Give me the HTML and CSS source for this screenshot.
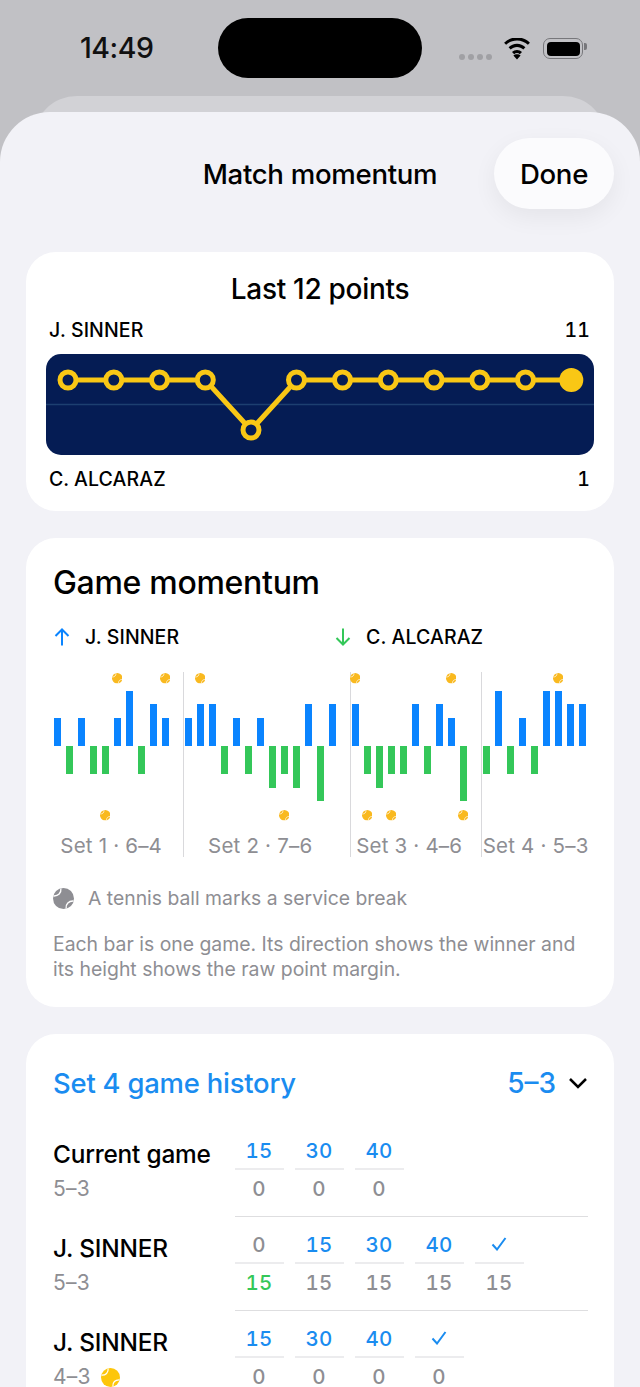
FILE: index.html
```html
<!DOCTYPE html>
<html lang="en">
<head>
<meta charset="utf-8">
<title>Match momentum</title>
<link rel="stylesheet" href="styles.css">
</head>
<body>
<svg class="defs" width="0" height="0" aria-hidden="true">
  <symbol id="ball" viewBox="0 0 20 20">
    <circle cx="10" cy="10" r="10" fill="currentColor"/>
    <path d="M7.5 .6C8 4.8 5 7.8 .6 7.6M19.4 12.4C15 12.2 12 15.2 12.5 19.4" fill="none" stroke="#fff" stroke-width="1.3"/>
  </symbol>
</svg>
<div class="screen">
  <div class="back-sheet"></div>
  <header class="status">
    <span class="time">14:49</span>
    <div class="island"></div>
    <div class="status-icons">
      <div class="dots"><i></i><i></i><i></i><i></i></div>
      <svg class="wifi" width="28" height="22" viewBox="0 0 28 22"><path d="M14 2.4c4.2 0 8 1.6 10.9 4.4l2-2.1C23.5 1.300 19 -.6 14-.6S4.500 1.300 1.100 4.700l2 2.100C6 4 9.800 2.400 14 2.400zM14 9c2.400 0 4.600 .9 6.300 2.500l2.100-2.200C20.100 7.100 17.200 5.800 14 5.800S7.900 7.100 5.600 9.300l2.100 2.200C9.400 9.900 11.600 9 14 9zM14 15.100c1.100 0 2 .4 2.800 1.100l2.200-2.300c-1.300-1.300-3.100-2-5-2s-3.700 .7-5 2l2.200 2.300c.8-.7 1.700-1.100 2.800-1.100zM14 21.400l3.600-3.800c-.9-.8-2.200-1.300-3.600-1.300s-2.700 .5-3.600 1.300z" fill="#000"/></svg>
      <div class="battery"><i></i></div>
    </div>
  </header>

  <main class="sheet">
    <div class="nav">
      <span></span>
      <h1 class="nav-title">Match momentum</h1>
      <button class="done">Done</button>
    </div>

    <section class="card card-points">
      <h2 class="points-title">Last 12 points</h2>
      <div class="score-line"><span>J. SINNER</span><span>11</span></div>
      <div class="panel">
        <svg width="549" height="101" viewBox="0 0 549 101">
          <line x1="0" y1="50.500" x2="549" y2="50.500" stroke="#1d3f70" stroke-width="1.500"/>
          <polyline points="22,26 67.800,26 113.500,26 159.300,26 205,76 250.500,26 296.500,26 342.300,26 388,26 433.800,26 479.500,26 525.300,26" fill="none" stroke="#f9c715" stroke-width="5"/>
          <g fill="#051c54" stroke="#f9c715" stroke-width="5">
            <circle cx="22" cy="26" r="8"/><circle cx="67.800" cy="26" r="8"/><circle cx="113.500" cy="26" r="8"/><circle cx="159.300" cy="26" r="8"/><circle cx="205" cy="76" r="8"/><circle cx="250.500" cy="26" r="8"/><circle cx="296.500" cy="26" r="8"/><circle cx="342.300" cy="26" r="8"/><circle cx="388" cy="26" r="8"/><circle cx="433.800" cy="26" r="8"/><circle cx="479.500" cy="26" r="8"/>
          </g>
          <circle cx="525.300" cy="26" r="12" fill="#f9c715"/>
        </svg>
      </div>
      <div class="score-line"><span>C. ALCARAZ</span><span>1</span></div>
    </section>

    <section class="card card-momentum">
      <h2 class="section-title">Game momentum</h2>
      <div class="legend">
        <div class="legend-item">
          <svg class="arrow-blue" width="18" height="20" viewBox="0 0 18 20"><path d="M9 18.500V2.500M2.500 9L9 2.500 15.500 9" fill="none" stroke="currentColor" stroke-width="2"/></svg>
          <span>J. SINNER</span>
        </div>
        <div class="legend-item">
          <svg class="arrow-green" width="18" height="20" viewBox="0 0 18 20"><path d="M9 1.500V17.500M2.500 11L9 17.500 15.500 11" fill="none" stroke="currentColor" stroke-width="2"/></svg>
          <span>C. ALCARAZ</span>
        </div>
      </div>

      <div class="chart">
        <div class="set">
          <div class="games">
            <div class="game"><i class="bar up h2"></i></div>
            <div class="game"><i class="bar down h2"></i></div>
            <div class="game"><i class="bar up h2"></i></div>
            <div class="game"><i class="bar down h2"></i></div>
            <div class="game"><i class="bar down h2"></i><svg class="mark mark-low"><use href="#ball"/></svg></div>
            <div class="game"><svg class="mark mark-high"><use href="#ball"/></svg><i class="bar up h2"></i></div>
            <div class="game"><i class="bar up h4"></i></div>
            <div class="game"><i class="bar down h2"></i></div>
            <div class="game"><i class="bar up h3"></i></div>
            <div class="game"><svg class="mark mark-high"><use href="#ball"/></svg><i class="bar up h2"></i></div>
          </div>
          <div class="set-label">Set 1 · 6–4</div>
        </div>
        <div class="set">
          <div class="games">
            <div class="game"><i class="bar up h2"></i></div>
            <div class="game"><svg class="mark mark-high"><use href="#ball"/></svg><i class="bar up h3"></i></div>
            <div class="game"><i class="bar up h3"></i></div>
            <div class="game"><i class="bar down h2"></i></div>
            <div class="game"><i class="bar up h2"></i></div>
            <div class="game"><i class="bar down h2"></i></div>
            <div class="game"><i class="bar up h2"></i></div>
            <div class="game"><i class="bar down h3"></i></div>
            <div class="game"><i class="bar down h2"></i><svg class="mark mark-low"><use href="#ball"/></svg></div>
            <div class="game"><i class="bar down h3"></i></div>
            <div class="game"><i class="bar up h3"></i></div>
            <div class="game"><i class="bar down h4"></i></div>
            <div class="game"><i class="bar up h3"></i></div>
          </div>
          <div class="set-label">Set 2 · 7–6</div>
        </div>
        <div class="set">
          <div class="games">
            <div class="game"><svg class="mark mark-high"><use href="#ball"/></svg><i class="bar up h3"></i></div>
            <div class="game"><i class="bar down h2"></i><svg class="mark mark-low"><use href="#ball"/></svg></div>
            <div class="game"><i class="bar down h3"></i></div>
            <div class="game"><i class="bar down h2"></i><svg class="mark mark-low"><use href="#ball"/></svg></div>
            <div class="game"><i class="bar down h2"></i></div>
            <div class="game"><i class="bar up h3"></i></div>
            <div class="game"><i class="bar down h2"></i></div>
            <div class="game"><i class="bar up h3"></i></div>
            <div class="game"><svg class="mark mark-high"><use href="#ball"/></svg><i class="bar up h2"></i></div>
            <div class="game"><i class="bar down h4"></i><svg class="mark mark-low"><use href="#ball"/></svg></div>
          </div>
          <div class="set-label">Set 3 · 4–6</div>
        </div>
        <div class="set">
          <div class="games">
            <div class="game"><i class="bar down h2"></i></div>
            <div class="game"><i class="bar up h4"></i></div>
            <div class="game"><i class="bar down h2"></i></div>
            <div class="game"><i class="bar up h2"></i></div>
            <div class="game"><i class="bar down h2"></i></div>
            <div class="game"><i class="bar up h4"></i></div>
            <div class="game"><svg class="mark mark-high"><use href="#ball"/></svg><i class="bar up h4"></i></div>
            <div class="game"><i class="bar up h3"></i></div>
            <div class="game"><i class="bar up h3"></i></div>
          </div>
          <div class="set-label">Set 4 · 5–3</div>
        </div>
      </div>

      <div class="ball-note">
        <svg class="note-ball"><use href="#ball"/></svg>
        <span>A tennis ball marks a service break</span>
      </div>
      <p class="explain">Each bar is one game. Its direction shows the winner and its height shows the raw point margin.</p>
    </section>

    <section class="card card-history">
      <div class="history-head">
        <h2 class="history-title">Set 4 game history</h2>
        <span class="history-score">5–3</span>
        <svg class="chevron" width="20" height="12" viewBox="0 0 20 12"><path d="M2 2l8 8 8-8" fill="none" stroke="#000" stroke-width="2.500"/></svg>
      </div>

      <div class="row">
        <div class="row-label"><div class="row-name">Current game</div><div class="row-sub">5–3</div></div>
        <div class="points">
          <div class="pt"><span class="top">15</span><span class="bot">0</span></div>
          <div class="pt"><span class="top">30</span><span class="bot">0</span></div>
          <div class="pt"><span class="top">40</span><span class="bot">0</span></div>
        </div>
      </div>
      <div class="row">
        <div class="row-label"><div class="row-name">J. SINNER</div><div class="row-sub">5–3</div></div>
        <div class="points">
          <div class="pt"><span class="top muted">0</span><span class="bot won">15</span></div>
          <div class="pt"><span class="top">15</span><span class="bot">15</span></div>
          <div class="pt"><span class="top">30</span><span class="bot">15</span></div>
          <div class="pt"><span class="top">40</span><span class="bot">15</span></div>
          <div class="pt"><span class="top"><svg class="check" width="16" height="14" viewBox="0 0 16 14"><path d="M1.500 7.500L6 12.500 14.500 1" fill="none" stroke="currentColor" stroke-width="2"/></svg></span><span class="bot">15</span></div>
        </div>
      </div>
      <div class="row">
        <div class="row-label"><div class="row-name">J. SINNER</div><div class="row-sub">4–3 <svg class="sub-ball"><use href="#ball"/></svg></div></div>
        <div class="points">
          <div class="pt"><span class="top">15</span><span class="bot">0</span></div>
          <div class="pt"><span class="top">30</span><span class="bot">0</span></div>
          <div class="pt"><span class="top">40</span><span class="bot">0</span></div>
          <div class="pt"><span class="top"><svg class="check" width="16" height="14" viewBox="0 0 16 14"><path d="M1.500 7.500L6 12.500 14.500 1" fill="none" stroke="currentColor" stroke-width="2"/></svg></span><span class="bot">0</span></div>
        </div>
      </div>
    </section>
  </main>
</div>
</body>
</html>
```
FILE: styles.css
```css
* { box-sizing: border-box; }
html, body { margin: 0; padding: 0; }
body { font-family: Inter, "Liberation Sans", sans-serif; color: #000; }
h1, h2, p { margin: 0; font-weight: 500; }
.defs { position: absolute; }

.screen {
  position: relative;
  width: 640px;
  height: 1387px;
  overflow: hidden;
  background: #c1c1c5;
}
.back-sheet {
  position: absolute;
  top: 96px;
  left: 33px;
  right: 33px;
  height: 80px;
  border-radius: 44px 44px 0 0;
  background: #d2d2d6;
}

/* status bar */
.status {
  position: relative;
  height: 112px;
  display: flex;
  align-items: flex-start;
  padding-top: 18px;
}
.time {
  width: 218px;
  padding-left: 80px;
  font-size: 28.500px;
  font-weight: 500;
  line-height: 60px;
  letter-spacing: -.5px;
  color: #111;
}
.island {
  width: 204px;
  height: 60px;
  border-radius: 30px;
  background: #000;
}
.status-icons {
  display: flex;
  align-items: center;
  padding: 19px 0 0 37px;
}
.dots { display: flex; gap: 3px; margin: 16px 11px 0 0; }
.dots i { width: 6px; height: 6px; border-radius: 50%; background: #a0a0a4; }
.wifi { margin-right: 12px; margin-top: 1px; }
.battery {
  position: relative;
  width: 40px;
  height: 21px;
  padding: 2.500px;
  border: 1.500px solid #77777b;
  border-radius: 7px;
}
.battery i { display: block; height: 100%; border-radius: 4px; background: #000; }
.battery::after {
  content: "";
  position: absolute;
  left: 40px;
  top: 4px;
  width: 2.500px;
  height: 7px;
  border-radius: 0 2px 2px 0;
  background: #77777b;
}

/* sheet */
.sheet {
  position: relative;
  height: 1275px;
  padding: 26px 26px 0;
  background: #f2f2f7;
  border-radius: 50px 50px 0 0;
}
.nav {
  display: grid;
  grid-template-columns: 1fr auto 1fr;
  align-items: center;
  height: 71px;
  margin-bottom: 43px;
}
.nav-title { font-size: 27.600px; line-height: 69px; letter-spacing: -.3px; padding-top: 2px; }
.done {
  justify-self: end;
  width: 120px;
  height: 71px;
  padding: 1px 0 0;
  border: 0;
  border-radius: 36px;
  background: #fbfbfd;
  box-shadow: 0 8px 24px rgba(0,0,0,.06);
  font: 500 27.600px Inter, "Liberation Sans", sans-serif;
  letter-spacing: -.3px;
  color: #000;
}

.card {
  background: #fff;
  border-radius: 30px;
  margin-bottom: 27px;
}

/* last 12 points */
.card-points { height: 259px; padding: 20px 20px 0; }
.points-title {
  font-size: 28px;
  line-height: 34px;
  text-align: center;
  letter-spacing: -.3px;
}
.score-line {
  display: flex;
  justify-content: space-between;
  padding: 0 4px 0 3px;
  height: 32px;
  font-size: 19.500px;
  font-weight: 500;
  line-height: 32px;
  letter-spacing: .1px;
  font-variant-numeric: tabular-nums;
}
.card-points .points-title + .score-line { margin-top: 8px; margin-bottom: 8px; }
.panel {
  height: 101px;
  border-radius: 15px;
  background: #051c54;
  overflow: hidden;
  margin-bottom: 8px;
}
.panel svg { display: block; }

/* game momentum */
.card-momentum { height: 469px; padding: 26px 27px 0; }
.section-title { font-size: 32px; line-height: 38px; letter-spacing: -.3px; }
.legend {
  display: grid;
  grid-template-columns: 281px 1fr;
  height: 30px;
  margin-top: 20px;
  margin-bottom: 20px;
}
.legend-item {
  display: flex;
  align-items: center;
  gap: 14px;
  font-size: 19.500px;
  font-weight: 500;
  letter-spacing: .1px;
}
.arrow-blue { color: #0a84ff; }
.arrow-green { color: #34c759; }

.chart { display: flex; margin-left: .7px; }
.set { margin-right: 14px; }
.set + .set { border-left: 1px solid #d9d9dc; padding-left: 1px; }
.games { display: flex; gap: 5px; }
.game {
  display: grid;
  width: 7px;
  grid-template-rows: 18px 56px 56px 24px;
  justify-items: center;
}
.bar { display: block; width: 7px; grid-column: 1; }
.bar.up { grid-row: 2; align-self: end; background: #0a84ff; }
.bar.down { grid-row: 3; align-self: start; background: #34c759; }
.h2 { height: 28px; }
.h3 { height: 42px; }
.h4 { height: 55px; }
.mark { width: 10.500px; height: 10.500px; color: #f9b91f; grid-column: 1; margin: 0 -2px; }
.mark-high { grid-row: 1; align-self: start; margin-top: 1px; }
.mark-low { grid-row: 4; align-self: start; margin-top: 8px; }
.set-label {
  height: 31px;
  text-align: center;
  white-space: nowrap;
  font-size: 20.500px;
  line-height: 40px;
  letter-spacing: .2px;
  color: #8e8e93;
}

.ball-note {
  display: flex;
  align-items: center;
  gap: 14px;
  margin-top: 29px;
  height: 24px;
  font-size: 19.350px;
  color: #8e8e93;
}
.note-ball { width: 21px; height: 21px; color: #8e8e93; flex: none; }
.explain {
  margin-top: 22px;
  font-size: 19.400px;
  font-weight: 400;
  line-height: 25px;
  color: #8e8e93;
}

/* history */
.card-history { padding: 28px 26px 0 27px; height: 400px; margin-bottom: 0; }
.history-head {
  display: flex;
  align-items: center;
  height: 42px;
  margin-bottom: 28px;
}
.history-title {
  flex: 1;
  font-size: 27.400px;
  letter-spacing: -.2px;
  color: #1a8cf0;
}
.history-score { font-size: 28px; font-weight: 500; color: #1a8cf0; }
.chevron { margin-left: 12px; }

.row { display: flex; height: 94px; }
.row-label { width: 181.500px; flex: none; }
.row-name { font-size: 24.400px; font-weight: 500; line-height: 34px; margin-top: 5px; letter-spacing: -.2px; }
.row-sub {
  display: flex;
  align-items: center;
  gap: 10px;
  margin-top: 3px;
  font-size: 21px;
  line-height: 30px;
  letter-spacing: .2px;
  color: #8e8e93;
}
.sub-ball { width: 19px; height: 19px; color: #fdc60a; }
.points {
  flex: 1;
  display: flex;
  gap: 11px;
  height: 85px;
  border-bottom: 1px solid #dedee0;
}
.row:last-child .points { border-bottom: 0; }
.pt { display: flex; flex-direction: column; width: 49px; text-align: center; font-variant-numeric: tabular-nums; }
.top {
  display: flex;
  align-items: center;
  justify-content: center;
  height: 38px;
  border-bottom: 2px solid #ececee;
  font-size: 20.500px;
  font-weight: 500;
  letter-spacing: .3px;
  color: #1a8cf0;
}
.top.muted { color: #8e8e93; }
.bot {
  height: 38px;
  line-height: 38px;
  font-size: 20.500px;
  font-weight: 500;
  letter-spacing: .3px;
  color: #8e8e93;
}
.bot.won { color: #34c759; }
```
